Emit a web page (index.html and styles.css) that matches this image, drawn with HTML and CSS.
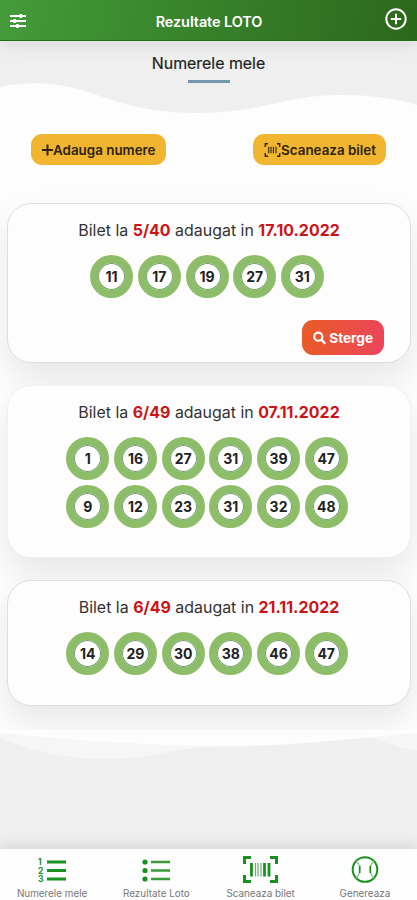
FILE: index.html
```html
<!DOCTYPE html>
<html lang="ro">
<head>
    <meta charset="utf-8">
    <meta name="viewport" content="width=device-width, initial-scale=1">
    <title>Rezultate LOTO</title>
    <link rel="stylesheet" href="styles.css">
</head>
<body>
    <header class="topbar">
        <svg class="menu-icon" viewBox="0 0 16 14" fill="none" stroke="#fff" stroke-width="2">
            <path d="M0 2h16M0 7h16M0 12h16"/>
            <path d="M10.7 0v4M4.6 5v4M7.5 10v4" stroke-width="2.4"/>
        </svg>
        <h1>Rezultate LOTO</h1>
        <svg class="plus-icon" viewBox="0 0 22 22" fill="none" stroke="#fff" stroke-width="2">
            <circle cx="11" cy="11" r="9.7"/>
            <path d="M11 5.8v10.4M5.8 11h10.4"/>
        </svg>
    </header>

    <section class="hero">
        <h2>Numerele mele</h2>
        <svg class="wave" viewBox="0 0 417 36" preserveAspectRatio="none">
            <path fill="#fdfdfd" d="M0 4C35-3 62 0 94 11C130 23 154 30 200 30C262 30 286 12 340 12C370 12 392 15 417 22V36H0Z"/>
        </svg>
    </section>

    <main>
        <div class="buttons">
            <button class="add-btn">
                <svg width="11" height="12" viewBox="0 0 11 12" stroke="#2b2410" stroke-width="2"><path d="M5.5 .5v11M0 6h11"/></svg>Adauga numere
            </button>
            <button class="add-btn">
                <svg width="17" height="14" viewBox="0 0 17 14" fill="none" stroke="#2b2410" stroke-width="1.4">
                    <path d="M4 .8H1.3V4M13 .8h2.7V4M4 13.2H1.3V10M13 13.2h2.7V10"/>
                    <path d="M4.7 3.8v6.4M7 3.8v6.4M9.4 3.8v6.4M12 3.8v6.4" stroke-width="1.1"/>
                </svg>Scaneaza bilet
            </button>
        </div>

        <div class="card card-search">
            <p>Bilet la <b>5/40</b> adaugat in <b>17.10.2022</b></p>
            <div class="row"><span>11</span><span>17</span><span>19</span><span>27</span><span>31</span></div>
            <button class="delete-btn">
                <svg width="14" height="14" viewBox="0 0 14 14" fill="none" stroke="#fff" stroke-width="2.2"><circle cx="5.6" cy="5.6" r="4.3"/><path d="M8.8 8.8l4.2 4.2" stroke-width="2.6"/></svg>
                Sterge
            </button>
        </div>

        <div class="card card-double">
            <p>Bilet la <b>6/49</b> adaugat in <b>07.11.2022</b></p>
            <div class="row"><span>1</span><span>16</span><span>27</span><span>31</span><span>39</span><span>47</span></div>
            <div class="row"><span>9</span><span>12</span><span>23</span><span>31</span><span>32</span><span>48</span></div>
        </div>

        <div class="card card-single">
            <p>Bilet la <b>6/49</b> adaugat in <b>21.11.2022</b></p>
            <div class="row"><span>14</span><span>29</span><span>30</span><span>38</span><span>46</span><span>47</span></div>
        </div>
    </main>

    <svg class="wave-bottom" viewBox="0 0 417 32" preserveAspectRatio="none">
        <path fill="#f6f6f6" d="M0 8C30 21 66 29 105 29C150 29 174 18 210 17L370 8C388 13 400 18 417 21V0H0Z"/>
        <path fill="#fdfdfd" d="M0 3C70 10 155 16 230 16C300 16 350 8 417 3V0H0Z"/>
    </svg>

    <nav class="tabbar">
        <a>
            <svg width="28" height="26" viewBox="0 0 28 26" stroke="#18911f" stroke-width="3">
                <path d="M9 5h19M9 13.5h19M9 22h19"/>
                <g fill="#18911f" stroke="none" class="digits"><text x="0" y="8">1</text><text x="0" y="16.7">2</text><text x="0" y="25.3">3</text></g>
            </svg>
            Numerele mele
        </a>
        <a>
            <svg width="28" height="26" viewBox="0 0 28 26" stroke="#3a9a35" stroke-width="2.4">
                <path d="M9 5h19M9 13.5h19M9 22h19"/>
                <g fill="#18911f" stroke="none"><circle cx="3" cy="5" r="2.6"/><circle cx="3" cy="13.5" r="2.6"/><circle cx="3" cy="22" r="2.6"/></g>
            </svg>
            Rezultate Loto
        </a>
        <a>
            <svg width="35" height="27" viewBox="0 0 35 27" fill="none" stroke="#18911f" stroke-width="3">
                <path d="M8 1.5H1.5V8M27 1.5h6.5V8M8 25.5H1.5V19M27 25.5h6.5V19"/>
                <path d="M8.5 7v13.5M21.5 7v13.5M26 7v13.5" stroke-width="2.8"/>
                <path d="M12.5 7v13.5M15 7v13.5M18 7v13.5" stroke-width="1.2" stroke="#6cad68"/>
            </svg>
            Scaneaza bilet
        </a>
        <a>
            <svg width="28" height="27" viewBox="0 0 28 27" fill="none" stroke="#18911f" stroke-width="2">
                <circle cx="14" cy="13.5" r="12.3"/>
                <path d="M5 5C10 9 10 18 5 22M23 5C18 9 18 18 23 22" stroke-width="1.1" stroke="#7cba78"/>
                <path d="M8.7 10v7M19.3 10v7" stroke-width="1.7"/>
            </svg>
            Genereaza
        </a>
    </nav>
</body>
</html>
```

FILE: styles.css
```css
* { box-sizing: border-box; }
body { margin: 0; height: 900px; display: flex; flex-direction: column; overflow: hidden;
       background-color: #efefef; color: #333; font-family: Inter, "Liberation Sans", sans-serif; }
h1, h2, p { margin: 0; }
button { border: none; font-family: inherit; cursor: pointer; }

.topbar { height: 41px; flex: none; padding: 0 10px 0 10px; display: flex; align-items: center;
          justify-content: space-between; position: relative; z-index: 2;
          background: linear-gradient(100deg, #459b3a, #37812a 50%, #2c681c);
          border-bottom: 1px solid #187018; box-shadow: 0 3px 18px rgba(0,0,0,0.1); }
.topbar h1 { font-size: 14.5px; font-weight: 600; color: white; padding: 3px 0 0 7px; letter-spacing: -0.1px; }
.menu-icon { width: 16px; height: 14px; margin-top: 2px; }
.plus-icon { width: 22px; height: 22px; margin-top: -2px; }

.hero { height: 78px; flex: none; position: relative; text-align: center; }
.hero h2 { padding-top: 13px; font-size: 15.9px; line-height: 20px; font-weight: 400; color: #222;
           -webkit-text-stroke: 0.2px #222; }
.hero h2::after { content: ''; display: block; width: 42px; height: 3px; margin: 6px auto 0; background-color: #7398ad; }
.wave { position: absolute; left: 0; bottom: 0; width: 100%; height: 36px; }

main { flex: none; height: 611px; padding: 15px 6px 0 7px; background-color: #fdfdfd; overflow: hidden; }
.buttons { display: flex; justify-content: space-between; padding: 0 25px 0 24px; margin-bottom: 38px; }
.add-btn { display: flex; align-items: center; height: 31px; padding: 0 10px 0 11px; border-radius: 11px;
           background-color: #f2b530; color: #2b2410; font-size: 13.4px; font-weight: 600; }

.card { position: relative; border: 1px solid #ddd; border-radius: 24px; background-color: #fdfdfd;
        padding-top: 16px; margin-bottom: 22px; box-shadow: 0 16px 34px rgba(0,0,0,0.09); }
.card p { text-align: center; font-size: 15.95px; line-height: 21px; margin-bottom: 14px; }
.card b { color: #cb1418; font-weight: 700; }
.card-search { height: 160px; }
.card-double { height: 173px; border-color: #f0f0f0; }
.card-single { height: 126px; }

.row { display: flex; justify-content: center; gap: 4.7px; margin-bottom: 5px; padding-right: 4px; }
.row span { width: 43px; height: 43px; border-radius: 50%; border: 8px solid #8dbd69;
            display: flex; align-items: center; justify-content: center; background-color: #fff;
            box-shadow: inset 0 0 0 1px #72a06b; font-size: 14px; font-weight: 650; color: #222; }
.delete-btn { display: flex; align-items: center; gap: 3px; width: 82px; height: 35px; padding: 0 11px;
              margin: 22px 26px 0 auto; border-radius: 11px; color: white; font-size: 13.6px; font-weight: 700;
              background: linear-gradient(100deg, #e95c24, #ec445d); }

.wave-bottom { width: 100%; height: 32px; flex: none; }

.tabbar { margin-top: auto; height: 51px; flex: none; display: grid; grid-template-columns: repeat(4, 1fr);
          background-color: #fdfdfd; box-shadow: 0 -3px 14px rgba(0,0,0,0.12); }
.tabbar a { display: flex; flex-direction: column; align-items: center; justify-content: flex-end;
            gap: 4px; padding-bottom: 1px; font-size: 9.9px; line-height: 12px; color: #777; }
.digits { font-size: 8.5px; font-weight: 700; }
```
